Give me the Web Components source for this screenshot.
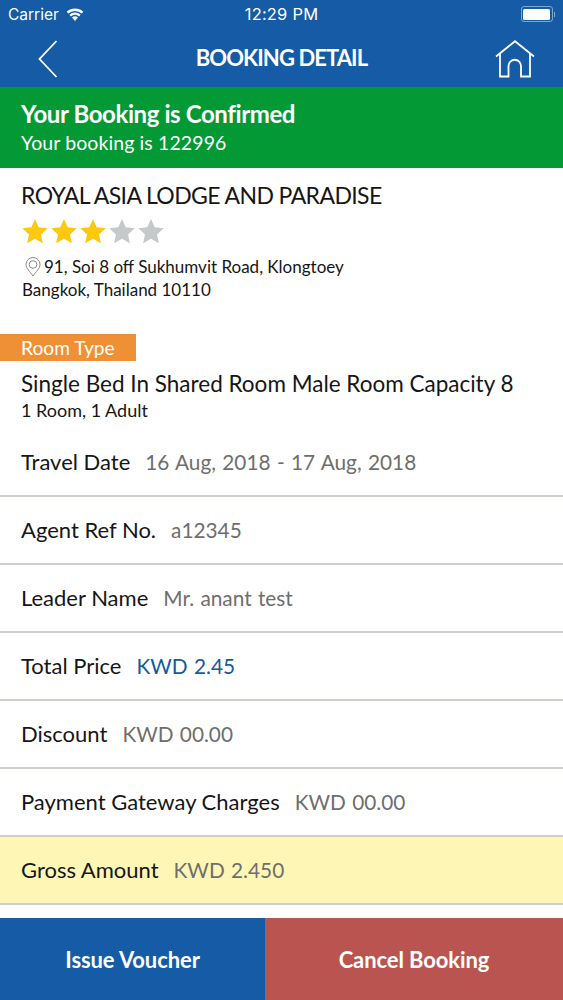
<!DOCTYPE html>
<html>
<head>
<meta charset="utf-8">
<style>
  html, body { margin: 0; padding: 0; background: #fff; }
  body { width: 563px; height: 1000px; overflow: hidden; font-family: Lato, "Noto Sans", sans-serif; }
</style>
</head>
<body>
<booking-page>
  <status-bar></status-bar>
  <nav-bar title="BOOKING DETAIL"></nav-bar>
  <confirm-banner heading="Your Booking is Confirmed" sub="Your booking is 122996"></confirm-banner>
  <hotel-info name="ROYAL ASIA LODGE AND PARADISE" stars="3" line1="91, Soi 8 off Sukhumvit Road, Klongtoey" line2="Bangkok, Thailand 10110"></hotel-info>
  <room-type label="Room Type" room="Single Bed In Shared Room Male Room Capacity 8" count="1 Room, 1 Adult"></room-type>
  <detail-row label="Travel Date" value="16 Aug, 2018 - 17 Aug, 2018" first></detail-row>
  <detail-row label="Agent Ref No." value="a12345"></detail-row>
  <detail-row label="Leader Name" value="Mr. anant test"></detail-row>
  <detail-row label="Total Price" value="KWD 2.45" tone="blue"></detail-row>
  <detail-row label="Discount" value="KWD 00.00"></detail-row>
  <detail-row label="Payment Gateway Charges" value="KWD 00.00"></detail-row>
  <detail-row label="Gross Amount" value="KWD 2.450" tone="total"></detail-row>
  <action-bar></action-bar>
</booking-page>
<script>
const Icons = {
  back: `<svg width="20" height="38" viewBox="0 0 20 38" fill="none" stroke="#fff" stroke-width="1.8"><polyline points="18.500,1 1.500,19 18.500,37"/></svg>`,
  home: `<svg width="40" height="38" viewBox="0 0 40 38" fill="none" stroke="#fff" stroke-width="1.8"><polyline points="1,16.500 20,1.200 39,16.500"/><path d="M5 13.500V36.500H13.500V26a6.250 6.250 0 0 1 12.500 0V36.500H35V13.500"/></svg>`,
  wifi: `<svg width="18" height="14" viewBox="0 0 18 14" fill="#fff"><path d="M9 14 6 10.6a4.4 4.4 0 0 1 6 0z"/><path d="M4.9 9.4 3.4 7.7a8.4 8.4 0 0 1 11.2 0L13.100 9.400a6.200 6.200 0 0 0-8.200 0z"/><path d="M2.300 6.500 .7 4.700a12.400 12.400 0 0 1 16.600 0L15.700 6.500a10.100 10.100 0 0 0-13.400 0z"/></svg>`,
  pin: `<svg width="16" height="20" viewBox="0 0 16 20" fill="none" stroke="#8a8a8a" stroke-width="1"><path d="M8 19C5 14.500 1 11.500 1 7.500a7 7 0 0 1 14 0C15 11.500 11 14.500 8 19z"/><circle cx="8" cy="7.500" r="3.800"/></svg>`,
  star: c => `<svg width="28" height="26" viewBox="0 0 28 26" fill="${c}"><polygon points="14,1 17.700,9.300 26.700,10.300 20,16.400 21.900,25.300 14,20.800 6.100,25.300 8,16.400 1.300,10.300 10.300,9.300"/></svg>`
};

function createComponent(tag, render) {
  customElements.define(tag, class extends HTMLElement {
    connectedCallback() {
      const shadow = this.attachShadow({ mode: 'open' });
      shadow.innerHTML = render(this);
    }
  });
}

createComponent('booking-page', () => `
  <style>
    :host { display: flex; flex-direction: column; height: 1000px; overflow: hidden; }
    ::slotted(action-bar) { margin-top: auto; }
  </style>
  <slot></slot>`);

createComponent('status-bar', () => `
  <style>
    :host { display: grid; grid-template-columns: 1fr auto 1fr; align-items: center; height: 28px; padding: 0 8px; box-sizing: border-box; background: #155ba6; color: #fff; font-family: Inter, sans-serif; font-size: 15.500px; }
    .left { display: flex; align-items: center; gap: 7px; }
    .time { font-size: 16.500px; letter-spacing: 0.2px; }
    .batt { justify-self: end; display: flex; align-items: center; }
    .shell { width: 32px; height: 16px; border: 1px solid #7fa6d0; border-radius: 3px; padding: 1.500px; box-sizing: border-box; }
    .fill { width: 100%; height: 100%; background: #fff; border-radius: 1.500px; }
    .nub { width: 1.500px; height: 5px; background: #7fa6d0; margin-left: 1px; }
  </style>
  <div class="left"><span>Carrier</span>${Icons.wifi}</div>
  <div class="time">12:29 PM</div>
  <div class="batt"><div class="shell"><div class="fill"></div></div><div class="nub"></div></div>`);

createComponent('nav-bar', el => `
  <style>
    :host { display: grid; grid-template-columns: 1fr auto 1fr; align-items: center; height: 59px; padding: 2px 28px 0; box-sizing: border-box; background: #155ba6; color: #fff; }
    h1 { margin: -2px 0 0; font-size: 22px; font-weight: 700; letter-spacing: -0.9px; }
    svg { display: block; }
    svg:first-of-type { margin-left: 10px; }
    svg:last-child { justify-self: end; }
  </style>
  ${Icons.back}<h1>${el.getAttribute('title')}</h1>${Icons.home}`);

createComponent('confirm-banner', el => `
  <style>
    :host { display: block; height: 81px; padding: 11px 21px 0; box-sizing: border-box; background: #039a35; color: #fff; }
    .h { font-size: 24px; font-weight: 700; line-height: 32px; letter-spacing: -0.4px; }
    .s { font-size: 19.500px; line-height: 26px; letter-spacing: 0.1px; }
  </style>
  <div class="h">${el.getAttribute('heading')}</div>
  <div class="s">${el.getAttribute('sub')}</div>`);

createComponent('hotel-info', el => {
  const n = +el.getAttribute('stars');
  const stars = [0, 1, 2, 3, 4].map(i => Icons.star(i < n ? '#fdc910' : '#c6c9c9')).join('');
  return `
  <style>
    :host { display: block; padding: 10px 22px 0 21px; height: 166px; box-sizing: border-box; color: #161616; }
    .name { font-size: 23px; line-height: 34px; letter-spacing: -0.6px; }
    .stars { display: flex; gap: 1px; margin-top: 5px; height: 28px; align-items: center; }
    .addr { font-size: 17px; line-height: 23px; margin: 10px 0 0 1px; }
    .addr svg { vertical-align: -4px; margin: 0 3px; }
  </style>
  <div class="name">${el.getAttribute('name')}</div>
  <div class="stars">${stars}</div>
  <div class="addr">${Icons.pin}${el.getAttribute('line1')}<br>${el.getAttribute('line2')}</div>`;
});

createComponent('room-type', el => `
  <style>
    :host { display: block; height: 93px; color: #161616; }
    .tag { width: 136px; height: 27px; line-height: 28px; padding-left: 21px; box-sizing: border-box; background: #f09036; color: #fff; font-size: 19.200px; }
    .room { padding: 7px 21px 0; font-size: 22.500px; line-height: 32px; white-space: nowrap; }
    .count { padding: 0 21px; font-size: 18px; line-height: 20px; }
  </style>
  <div class="tag">${el.getAttribute('label')}</div>
  <div class="room">${el.getAttribute('room')}</div>
  <div class="count">${el.getAttribute('count')}</div>`);

createComponent('detail-row', el => {
  const tone = el.getAttribute('tone');
  const valueColor = tone === 'blue' ? '#15599f' : '#6e6e6e';
  const bg = tone === 'total' ? '#fef6b4' : 'transparent';
  const first = el.hasAttribute('first');
  return `
  <style>
    :host { display: flex; align-items: center; gap: 15px; flex: none; height: ${first ? 70 : 68}px; padding: 0 21px ${first ? 0 : 2}px; box-sizing: border-box; background: ${bg}; border-bottom: 2px solid #cfcdc8; font-size: 22px; color: #161616; white-space: nowrap; }
    .v { color: ${valueColor}; font-size: 20.800px; word-spacing: 1px; }
  </style>
  <span>${el.getAttribute('label')}</span><span class="v">${el.getAttribute('value')}</span>`;
});

createComponent('action-bar', () => `
  <style>
    :host { display: grid; grid-template-columns: 265px 1fr; height: 82px; flex: none; color: #fff; font-size: 22px; font-weight: 700; letter-spacing: -0.1px; }
    div { display: flex; align-items: center; justify-content: center; }
    .issue { background: #155ba6; }
    .cancel { background: #b95450; }
  </style>
  <div class="issue">Issue Voucher</div><div class="cancel">Cancel Booking</div>`);
</script>
</body>
</html>
